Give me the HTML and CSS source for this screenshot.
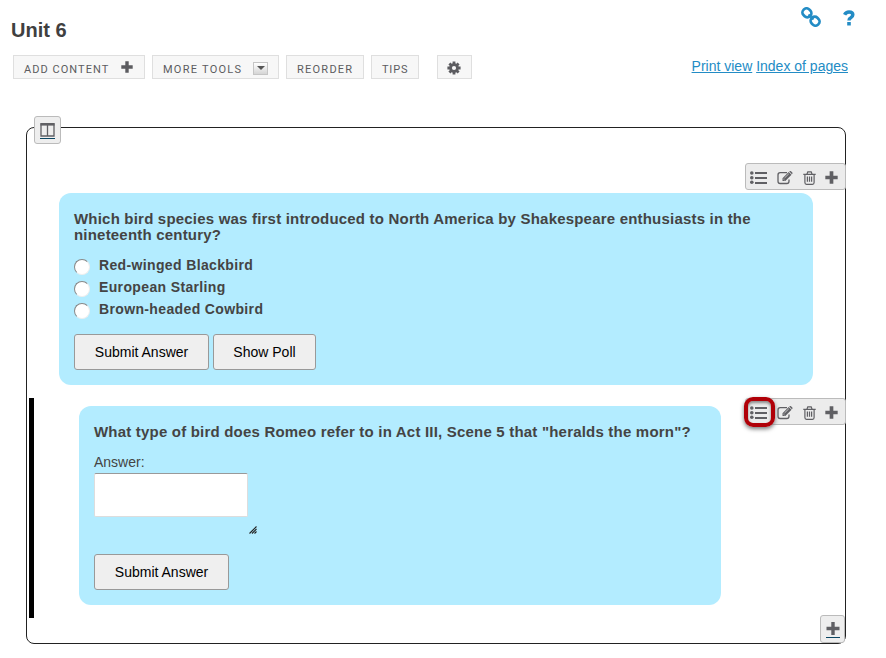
FILE: index.html
```html
<!DOCTYPE html>
<html lang="en">
<head>
<meta charset="utf-8">
<title>Unit 6</title>
<link rel="stylesheet" href="styles.css">
</head>
<body>
<svg class="symbols" aria-hidden="true">
  <symbol id="plus" viewBox="0 0 12 12"><path d="M4.3 0.3h3.4v4h4v3.4h-4v4H4.3v-4h-4V4.3h4z"/></symbol>
  <symbol id="list" viewBox="0 0 17 13"><path d="M5 1h12v2H5zM5 6h12v2H5zM5 11h12v2H5z"/><circle cx="1.8" cy="2" r="1.8"/><circle cx="1.8" cy="6.8" r="1.8"/><circle cx="1.8" cy="11.2" r="1.8"/></symbol>
  <symbol id="edit" viewBox="0 0 16 14"><path d="M10 1.7H3.2Q1 1.7 1 3.9v6.4q0 2.2 2.2 2.2h6.6q2.2 0 2.2-2.2V8.6" fill="none" stroke="currentColor" stroke-width="1.3"/><path d="M5.5 10V7.3L11.7 1l2.8 2.7L8.3 10zM12.3.5l.5-.4q.6-.3 1.2.2l1.3 1.3q.5.6 0 1.2l-.4.4z"/><path d="M6.4 8l1.2 1.2M7.5 7l4.3-4.2" stroke="#ececec" stroke-width=".7"/></symbol>
  <symbol id="trash" viewBox="0 0 13 14"><path d="M1.9 3.8v7.7q0 1.8 1.6 1.8h6q1.6 0 1.6-1.8V3.8M.3 3.3h12.4M4 3l.8-2.2h3.4L9 3M4.4 5.5v5.3M6.5 5.5v5.3M8.6 5.5v5.3" fill="none" stroke="currentColor" stroke-width="1.2"/></symbol>
</svg>
<header class="header">
  <h1>Unit 6</h1>
  <nav class="utility">
    <svg class="chain" viewBox="0 0 20 20"><g fill="none" stroke="currentColor" stroke-width="2.7"><rect x="1.4" y="1.8" width="9" height="8" rx="3.7" transform="rotate(45 5.9 5.8)"/><rect x="9.6" y="10.2" width="9" height="8" rx="3.7" transform="rotate(45 14.1 14.2)"/><path d="M7.5 7.5l5 5" stroke-width="2"/></g></svg>
    <svg class="help" viewBox="0 0 12 16"><path d="M1.6 4.8Q3 2 6 2q3.8 0 3.8 2.8 0 1.8-2 2.9Q6 8.6 6 10.6" fill="none" stroke="currentColor" stroke-width="3.5"/><path d="M4.2 12h3.6v3.5H4.2z"/></svg>
  </nav>
</header>
<div class="toolbar">
  <a class="tool add">ADD CONTENT<svg class="plus"><use href="#plus"/></svg></a>
  <a class="tool more">MORE TOOLS<span class="drop"></span></a>
  <a class="tool reorder">REORDER</a>
  <a class="tool tips">TIPS</a>
  <a class="tool gear"><svg viewBox="-7 -7 14 14"><g stroke="currentColor" stroke-width="2.8"><path d="M0-6.6V6.6M-6.6 0H6.6M-4.6-4.6L4.6 4.6M-4.6 4.6L4.6-4.6"/></g><circle r="4.8"/><circle r="2.1" fill="#f7f7f7"/></svg></a>
  <div class="links"><a>Print view</a> <a>Index of pages</a></div>
</div>
<main class="page">
  <span class="corner columns"><svg viewBox="0 0 15 16"><path d="M1 1h13v12H1zM7.5 1v12" fill="none" stroke="currentColor" stroke-width="1.3"/><path d="M.5 0h14v2.6H.5z"/><path d="M0 15h15v1H0z" fill="#0b4662"/></svg></span>
  <section class="item first">
    <div class="actions"><svg class="list"><use href="#list"/></svg><svg class="edit"><use href="#edit"/></svg><svg class="trash"><use href="#trash"/></svg><svg class="plus"><use href="#plus"/></svg></div>
    <div class="question poll">
      <h2>Which bird species was first introduced to North America by Shakespeare enthusiasts in the<br>nineteenth century?</h2>
      <div class="choices">
        <label><i></i>Red-winged Blackbird</label>
        <label><i></i>European Starling</label>
        <label><i></i>Brown-headed Cowbird</label>
      </div>
      <div class="buttons"><button class="submit">Submit Answer</button><button class="show">Show Poll</button></div>
    </div>
  </section>
  <section class="item second">
    <div class="actions"><svg class="list"><use href="#list"/></svg><svg class="edit"><use href="#edit"/></svg><svg class="trash"><use href="#trash"/></svg><svg class="plus"><use href="#plus"/></svg><span class="highlight"></span></div>
    <div class="question essay">
      <h2>What type of bird does Romeo refer to in Act III, Scene 5 that "heralds the morn"?</h2>
      <div class="label">Answer:</div>
      <div class="field"></div>
      <svg class="grip" viewBox="0 0 8 8"><path d="M.5 7.5l7-7M3 7.5L7.5 3M5.5 7.5l2-2" stroke="#222" stroke-width="1.1"/></svg>
      <button class="submit">Submit Answer</button>
    </div>
  </section>
  <span class="corner append"><svg viewBox="0 0 14 16"><path d="M5.3 0h3.4v4.8h4.8v3.4H8.7V13H5.3V8.2H.5V4.8h4.8z"/><path d="M0 15h14v1H0z" fill="#0b4662"/></svg></span>
</main>
</body>
</html>
```
FILE: styles.css
```css
* { box-sizing: border-box; }
body { margin: 0; width: 886px; height: 658px; overflow: hidden; background: #fff; color: #444; font-family: "Liberation Sans", Arial, sans-serif; font-size: 14px; }
svg { display: block; fill: currentColor; flex: none; }
.symbols { position: absolute; width: 0; height: 0; }
.header { display: flex; justify-content: space-between; height: 55px; padding: 7px 31px 0 11px; }
h1 { margin: 11px 0 0; font-size: 20px; line-height: 24px; color: #404040; }
.utility { display: flex; gap: 22px; color: #238cc5; }
.chain { width: 20px; height: 20px; }
.help { width: 12px; height: 16px; margin-top: 3px; }
.toolbar { display: flex; height: 72px; padding-left: 13px; align-items: flex-start; }
.tool { display: flex; align-items: center; height: 24px; border: 1px solid #dfdfdf; background: #f7f7f7; color: #5c5c60; font: 11px Roboto, "Liberation Sans", sans-serif; letter-spacing: 1.25px; margin-right: 7px; padding: 5px 0 0 10px; white-space: nowrap; }
.add { width: 132px; letter-spacing: 1.05px; }
.add .plus { width: 12px; height: 12px; margin: -5px 0 0 12px; }
.more { width: 127px; }
.drop { width: 15px; height: 13px; margin: -3px 0 0 11px; border: 1px solid #c5c5c5; background: linear-gradient(#fff, #d5d5d5); display: grid; place-items: center; }
.drop::before { content: ""; border: 4px solid transparent; border-top: 4px solid #555; border-bottom: 0; }
.reorder { width: 78px; }
.tips { width: 48px; margin-right: 18px; letter-spacing: .8px; }
.gear { width: 35px; padding: 2px 0 0 9px; }
.gear svg { width: 14px; height: 14px; }
.links { margin: 3px 38px 0 auto; line-height: 16px; color: #238cc5; }
.links a { text-decoration: underline; }
.page { position: relative; width: 820px; height: 517px; margin-left: 26px; border: 1px solid #222; border-radius: 8px; padding-top: 65px; }
.corner { position: absolute; display: grid; place-items: center; border: 1px solid #bbb; border-radius: 3px; background: #eee; color: #606064; }
.columns { left: 7px; top: -12px; width: 27px; height: 28px; padding-top: 2px; }
.columns svg { width: 15px; height: 16px; }
.append { right: 0; bottom: 0; width: 25px; height: 28px; padding-top: 2px; }
.append svg { width: 14px; height: 16px; }
.item { position: relative; }
.first { height: 205px; padding-left: 32px; }
.second { height: 220px; border-left: 5px solid #000; margin-left: 2px; padding: 8px 0 0 45px; }
.actions { position: absolute; right: -1px; top: 0; width: 101px; height: 27px; display: flex; align-items: center; padding: 2px 0 0 5px; border: 1px solid #bbb; border-radius: 3px; background: #ececec; color: #606064; }
.first .actions { top: -30px; }
.actions .list { width: 17px; height: 13px; margin: 0 10px 0 -1px; }
.actions .edit { width: 16px; height: 14px; margin-right: 10px; }
.actions .trash { width: 13px; height: 14px; margin-right: 9px; }
.actions .plus { width: 13px; height: 13px; }
.highlight { position: absolute; left: -2px; top: -2px; width: 31px; height: 30px; border: 4px solid #b00008; border-radius: 9px; box-shadow: 0 2px 4px #777, inset 0 2px 3px #888; }
.question { background: #b3ecff; border-radius: 12px; padding-left: 15px; }
.poll { width: 754px; height: 192px; padding-top: 18px; }
h2 { margin: 0; font-size: 15px; line-height: 16px; white-space: nowrap; letter-spacing: .2px; }
.choices { margin-top: 11px; }
.choices label { display: flex; align-items: center; height: 22px; font-weight: bold; letter-spacing: .36px; }
.choices i { width: 16px; height: 16px; margin: 3px 9px 0 0; border-radius: 50%; border: 1.5px solid; border-color: #888 #eee #eee #888; background: #fff; }
.buttons { display: flex; gap: 4px; margin-top: 14px; }
button { height: 36px; padding: 0; border: 1px solid #999; border-radius: 3px; background: #efefef; color: #000; font: 14px "Liberation Sans", Arial, sans-serif; }
.submit { width: 135px; }
.show { width: 103px; }
.essay { width: 642px; height: 199px; padding-top: 18px; }
.label { margin-top: 14px; line-height: 16px; }
.field { width: 154px; height: 44px; margin-top: 3px; background: #fff; border: 1px solid #ddd; border-top-color: #999; border-radius: 2px; }
.grip { width: 8px; height: 8px; margin: 9px 0 20px 155px; }
```
